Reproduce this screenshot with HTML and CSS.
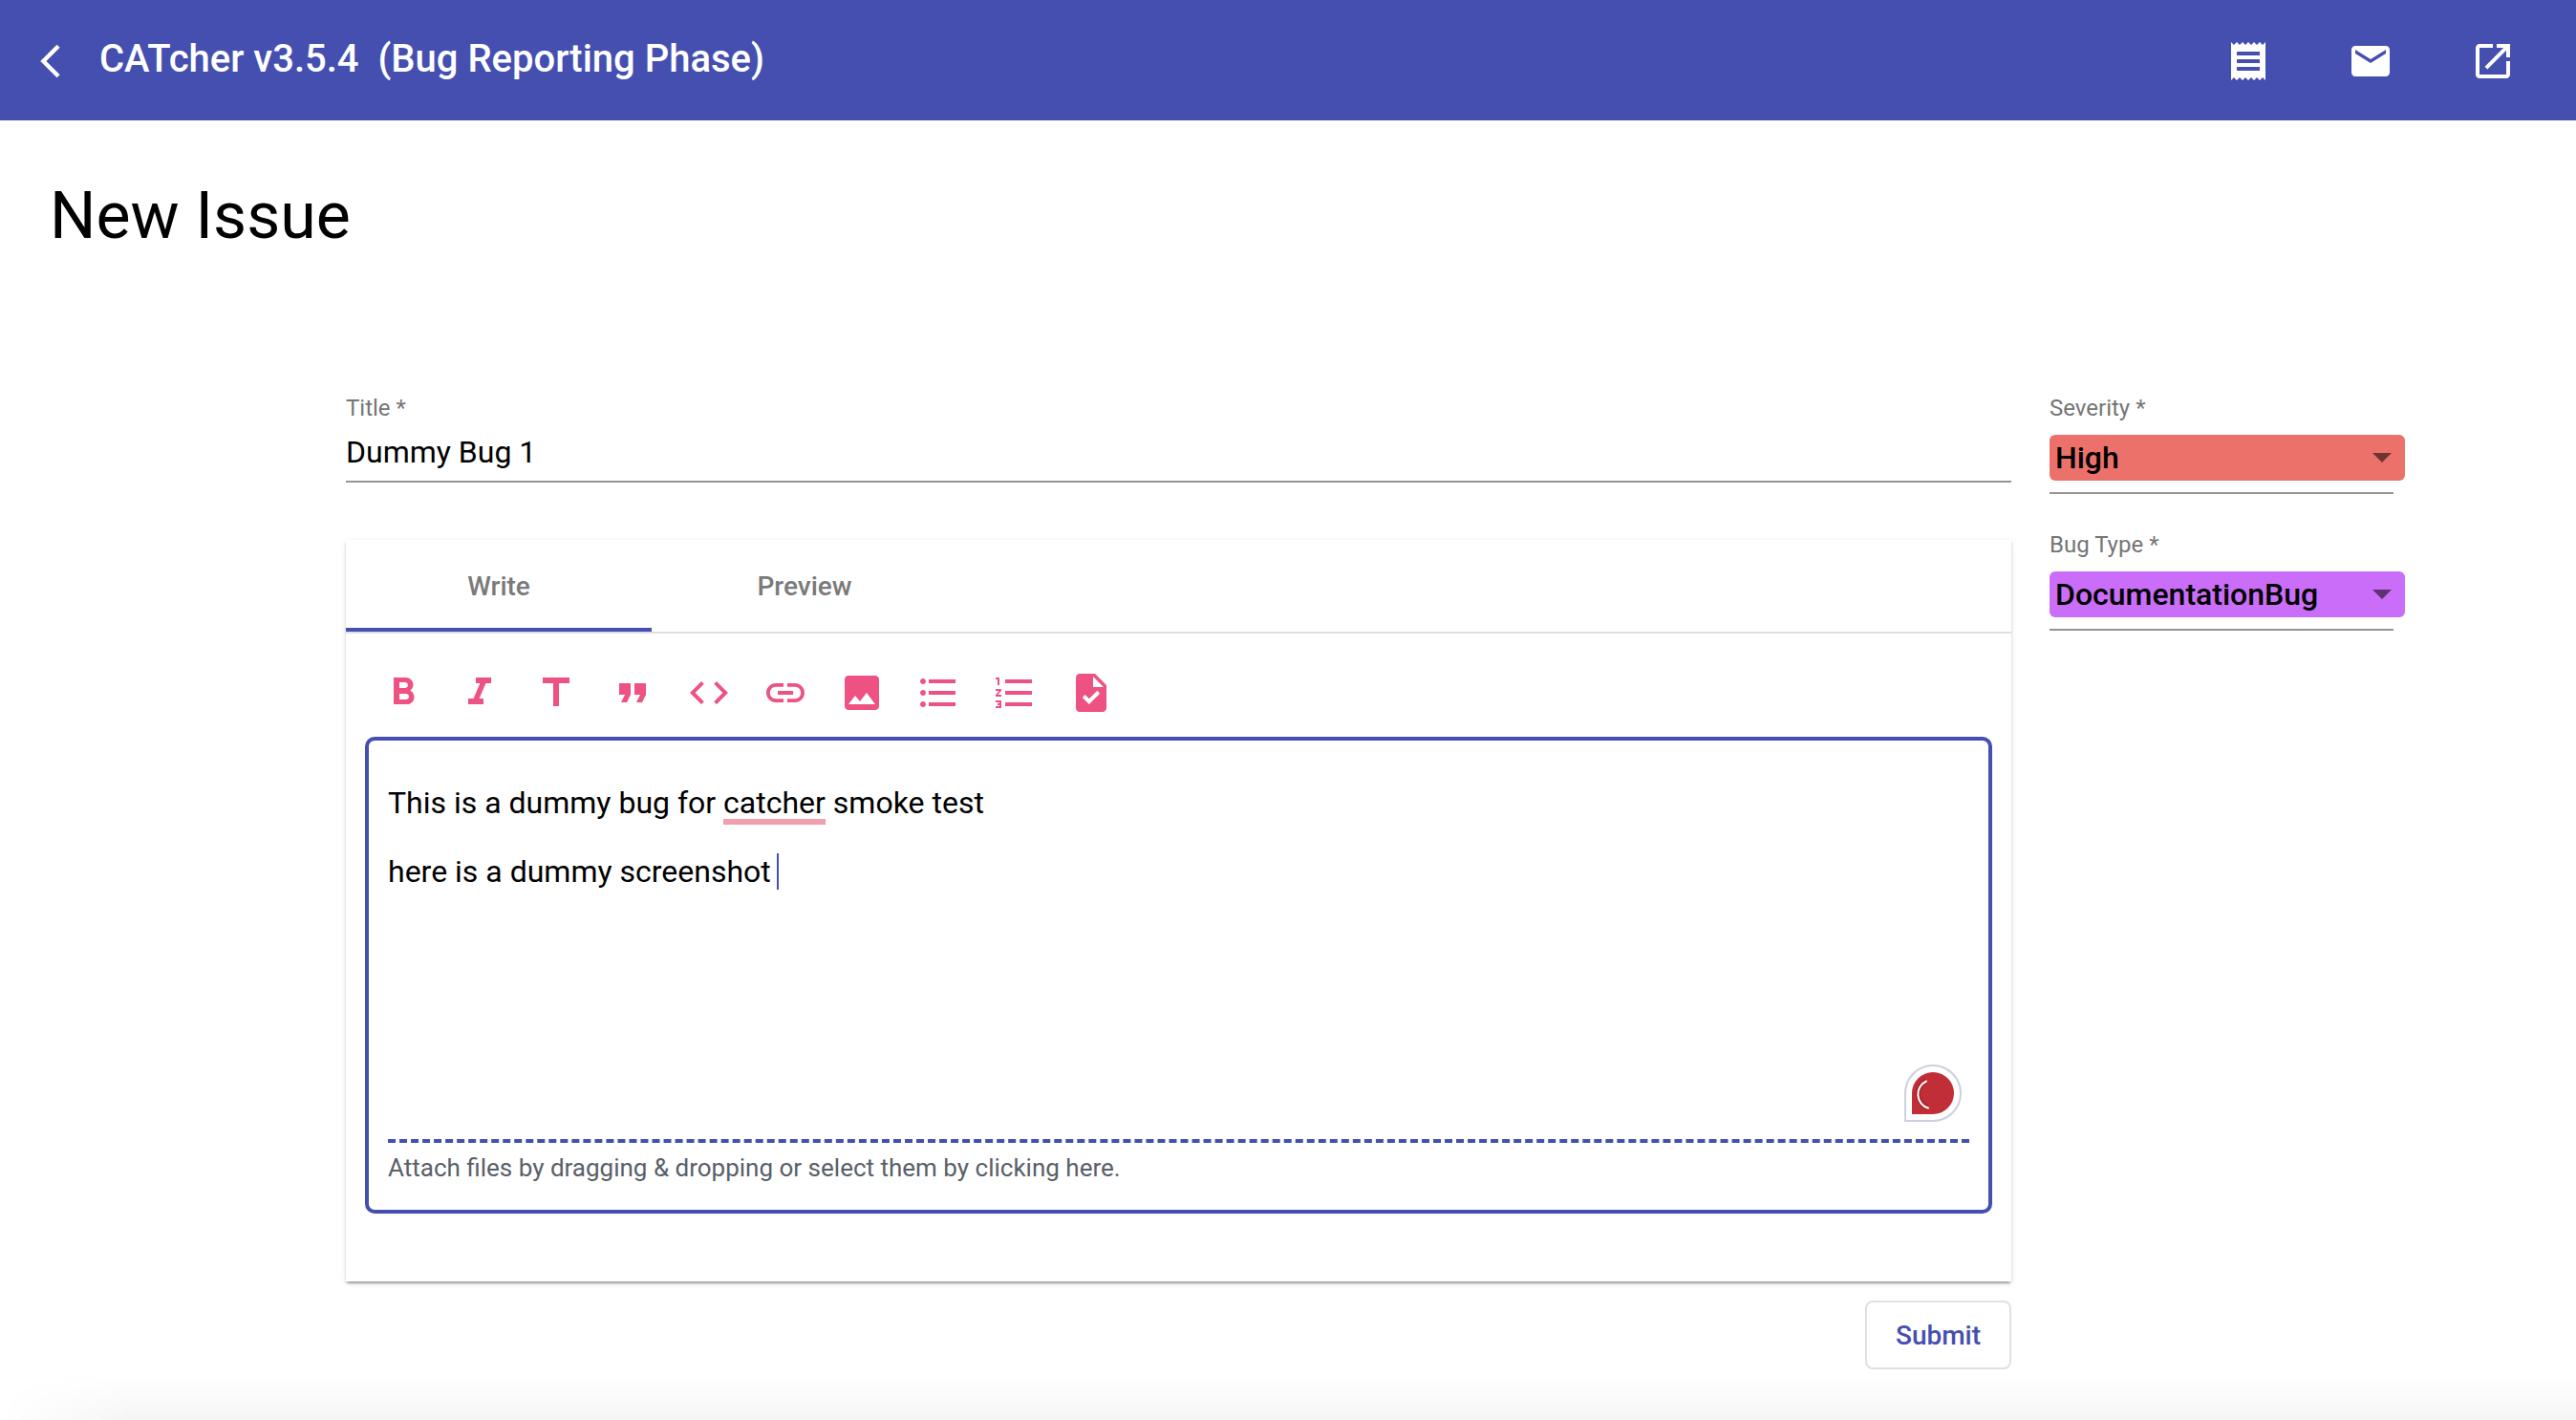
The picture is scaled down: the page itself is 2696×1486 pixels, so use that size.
FILE: index.html
```html
<!DOCTYPE html>
<html lang="en">
<head>
<meta charset="utf-8">
<meta name="viewport" content="width=device-width, initial-scale=1">
<title>CATcher</title>
<link rel="stylesheet" href="styles.css">
</head>
<body>
<header class="toolbar">
  <button class="toolbar-back" type="button" aria-label="Back">
    <svg class="back-icon" viewBox="0 0 24 24"><path d="M17.51 3.87L15.73 2.1 5.84 12l9.9 9.9 1.77-1.77L9.38 12z"/></svg>
  </button>
  <span class="toolbar-title">CATcher v3.5.4 &nbsp;(Bug Reporting Phase)</span>
  <nav class="toolbar-actions">
    <button class="icon-button" type="button" aria-label="Activity log">
      <svg class="icon" viewBox="0 0 24 24"><path d="M18 17H6v-2h12v2zm0-4H6v-2h12v2zm0-4H6V7h12v2zM3 22l1.5-1.5L6 22l1.500-1.500L9 22l1.500-1.500L12 22l1.500-1.500L15 22l1.500-1.500L18 22l1.500-1.500L21 22V2l-1.500 1.500L18 2l-1.500 1.500L15 2l-1.500 1.500L12 2l-1.500 1.500L9 2 7.500 3.500 6 2 4.500 3.500 3 2v20z"/></svg>
    </button>
    <button class="icon-button" type="button" aria-label="Mail">
      <svg class="icon" viewBox="0 0 24 24"><path d="M20 4H4c-1.100 0-1.990.9-1.990 2L2 18c0 1.100.9 2 2 2h16c1.100 0 2-.9 2-2V6c0-1.100-.9-2-2-2zm0 4l-8 5-8-5V6l8 5 8-5v2z"/></svg>
    </button>
    <a class="icon-button" href="#" aria-label="Open repository">
      <svg class="icon" viewBox="0 0 24 24"><path d="M19 19H5V5h7V3H5c-1.110 0-2 .9-2 2v14c0 1.100.89 2 2 2h14c1.100 0 2-.9 2-2v-7h-2v7zM14 3v2h3.590l-9.830 9.830 1.410 1.410L19 6.410V10h2V3h-7z"/></svg>
    </a>
  </nav>
</header>

<main class="page">
  <h1 class="page-title">New Issue</h1>
  <form class="issue-form">
    <div class="form-main">
      <div class="field">
        <label class="field-label" for="title">Title *</label>
        <input class="field-input" id="title" type="text" value="Dummy Bug 1">
      </div>

      <section class="card">
        <div class="tabs" role="tablist">
          <button class="tab tab-active" type="button" role="tab" aria-selected="true">Write</button>
          <button class="tab" type="button" role="tab" aria-selected="false">Preview</button>
        </div>
        <div class="editor-tools">
          <button class="tool" type="button" aria-label="Bold"><svg class="icon" viewBox="0 0 24 24"><path d="M15.600 10.790c.97-.67 1.650-1.770 1.650-2.790 0-2.260-1.750-4-4-4H7v14h7.040c2.090 0 3.710-1.700 3.710-3.790 0-1.520-.86-2.820-2.150-3.420zM10 6.500h3c.83 0 1.500.67 1.500 1.500s-.67 1.500-1.500 1.500h-3v-3zm3.500 9H10v-3h3.500c.83 0 1.500.67 1.500 1.500s-.67 1.500-1.500 1.500z"/></svg></button>
          <button class="tool" type="button" aria-label="Italic"><svg class="icon" viewBox="0 0 24 24"><path d="M10 4v3h2.210l-3.420 8H6v3h8v-3h-2.210l3.420-8H18V4z"/></svg></button>
          <button class="tool" type="button" aria-label="Heading"><svg class="icon" viewBox="0 0 24 24"><path d="M5 4v3h5.500v12h3V7H19V4z"/></svg></button>
          <button class="tool" type="button" aria-label="Quote"><svg class="icon" viewBox="0 0 24 24"><path d="M6 17h3l2-4V7H5v6h3zm8 0h3l2-4V7h-6v6h3z"/></svg></button>
          <button class="tool" type="button" aria-label="Code"><svg class="icon" viewBox="0 0 24 24"><path d="M9.400 16.600L4.800 12l4.600-4.600L8 6l-6 6 6 6 1.400-1.400zm5.200 0l4.600-4.600-4.600-4.600L16 6l6 6-6 6-1.400-1.400z"/></svg></button>
          <button class="tool" type="button" aria-label="Link"><svg class="icon" viewBox="0 0 24 24"><path d="M3.900 12c0-1.710 1.390-3.100 3.100-3.100h4V7H7c-2.760 0-5 2.240-5 5s2.240 5 5 5h4v-1.900H7c-1.710 0-3.100-1.390-3.100-3.100zM8 13h8v-2H8v2zm9-6h-4v1.900h4c1.710 0 3.100 1.390 3.100 3.100s-1.390 3.100-3.100 3.100h-4V17h4c2.760 0 5-2.240 5-5s-2.240-5-5-5z"/></svg></button>
          <button class="tool" type="button" aria-label="Image"><svg class="icon" viewBox="0 0 24 24"><path d="M21 19V5c0-1.100-.9-2-2-2H5c-1.100 0-2 .9-2 2v14c0 1.100.9 2 2 2h14c1.100 0 2-.9 2-2zM8.500 13.500l2.500 3.010L14.500 12l4.500 6H5l3.500-4.500z"/></svg></button>
          <button class="tool" type="button" aria-label="Bulleted list"><svg class="icon" viewBox="0 0 24 24"><path d="M4 10.500c-.83 0-1.500.67-1.500 1.500s.67 1.500 1.500 1.500 1.500-.67 1.500-1.500-.67-1.500-1.500-1.500zm0-6c-.83 0-1.500.67-1.500 1.500S3.170 7.500 4 7.500 5.500 6.830 5.500 6 4.830 4.500 4 4.500zm0 12c-.83 0-1.500.68-1.500 1.500s.68 1.500 1.500 1.500 1.500-.68 1.500-1.500-.67-1.500-1.500-1.500zM7 19h14v-2H7v2zm0-6h14v-2H7v2zm0-8v2h14V5H7z"/></svg></button>
          <button class="tool" type="button" aria-label="Numbered list"><svg class="icon" viewBox="0 0 24 24"><path d="M2 17h2v.5H3v1h1v.5H2v1h3v-4H2v1zm1-9h1V4H2v1h1v3zm-1 3h1.800L2 13.100v.9h3v-1H3.200L5 10.900V10H2v1zm5-6v2h14V5H7zm0 14h14v-2H7v2zm0-6h14v-2H7v2z"/></svg></button>
          <button class="tool" type="button" aria-label="Task list"><svg class="icon" viewBox="0 0 24 24"><path d="M14 2H6c-1.100 0-1.990.9-1.990 2L4 20c0 1.100.89 2 1.990 2H18c1.100 0 2-.9 2-2V8l-6-6zm-3.060 16L7.400 14.460l1.410-1.410 2.120 2.120 4.240-4.240 1.410 1.410L10.940 18zM13 9V3.500L18.500 9H13z"/></svg></button>
        </div>

        <div class="editor">
          <div class="editor-body">
            <textarea class="editor-text" aria-label="Description" spellcheck="false">This is a dummy bug for catcher smoke test

here is a dummy screenshot </textarea>
            <span class="spell-mark"></span>
            <span class="caret"></span>
            <svg class="checker" viewBox="0 0 60 60" aria-hidden="true">
              <path d="M1 59V30A29 29 0 1 1 30 59Z" fill="#fff" stroke="#cdd0de" stroke-width="2"/>
              <path d="M8 52V30A22 22 0 1 1 30 52Z" fill="#c22e38"/>
              <path d="M23 17A15 15 0 0 0 25 45" fill="none" stroke="#a82833" stroke-width="6"/>
              <path d="M23 17.500A15 15 0 0 0 25 45.500" fill="none" stroke="#fff" stroke-width="2" stroke-linecap="round"/>
            </svg>
          </div>
          <button class="attach" type="button">Attach files by dragging &amp; dropping or select them by clicking here.</button>
        </div>
      </section>

      <button class="submit" type="submit">Submit</button>
    </div>

    <aside class="form-side">
      <div class="side-field">
        <label class="field-label" for="severity">Severity *</label>
        <div class="select-wrap">
          <select class="select severity" id="severity"><option>High</option></select>
          <svg class="select-arrow" viewBox="0 0 20 10"><path d="M0 0h20L10 10z"/></svg>
        </div>
      </div>
      <div class="side-field">
        <label class="field-label" for="bugtype">Bug Type *</label>
        <div class="select-wrap">
          <select class="select bugtype" id="bugtype"><option>DocumentationBug</option></select>
          <svg class="select-arrow" viewBox="0 0 20 10"><path d="M0 0h20L10 10z"/></svg>
        </div>
      </div>
    </aside>
  </form>
</main>
<div class="bottom-shade"></div>
</body>
</html>
```
FILE: styles.css
```css
* {
  box-sizing: border-box;
}

:root {
  --primary: #454fb0;
  --accent: #ed5282;
  --line: #949494;
  --muted: #757575;
}

body {
  margin: 0;
  background: #fff;
  color: #000;
  font-family: Roboto, "Liberation Sans", sans-serif;
  font-size: 32px;
}

button,
input,
select,
textarea {
  margin: 0;
  padding: 0;
  border: 0;
  background: none;
  color: inherit;
  font: inherit;
  outline: 0;
}

.toolbar {
  display: flex;
  align-items: center;
  height: 126px;
  padding: 2px 47px 0 32px;
  background: var(--primary);
  color: #fff;
}

.toolbar-back {
  display: flex;
  width: 72px;
}

.back-icon {
  width: 42px;
  height: 42px;
  fill: currentColor;
}

.toolbar-title {
  font-size: 40px;
  font-weight: 500;
  line-height: 48px;
  padding-bottom: 4px;
}

.toolbar-actions {
  display: flex;
  gap: 48px;
  margin-left: auto;
}

.icon-button {
  display: flex;
  align-items: center;
  justify-content: center;
  width: 80px;
  height: 80px;
  color: inherit;
}

.icon {
  width: 48px;
  height: 48px;
  fill: currentColor;
}

.page {
  padding: 58px 52px 0;
}

.page-title {
  margin: 0;
  font-size: 68px;
  font-weight: 400;
  line-height: 84px;
}

.issue-form {
  display: grid;
  grid-template-columns: 1fr 360px;
  column-gap: 40px;
  padding: 143px 139px 0 310px;
}

.form-main {
  display: flex;
  flex-direction: column;
}

.field {
  display: flex;
  flex-direction: column;
  border-bottom: 2px solid var(--line);
}

.field-label {
  color: var(--muted);
  font-size: 24px;
  line-height: 32px;
}

.field-input {
  height: 36px;
  margin: 12px 0;
  line-height: 36px;
}

.card {
  margin-top: 60px;
  padding-bottom: 71px;
  background: #fff;
  box-shadow: 0 4px 2px -2px rgba(0, 0, 0, .2), 0 2px 2px 0 rgba(0, 0, 0, .14), 0 2px 6px 0 rgba(0, 0, 0, .12);
}

.tabs {
  display: flex;
  border-bottom: 2px solid #e0e0e0;
}

.tab {
  width: 320px;
  height: 96px;
  border-bottom: 4px solid transparent;
  border-top: 4px solid transparent;
  color: #7a7a7a;
  font-size: 28px;
  font-weight: 500;
}

.tab-active {
  border-bottom-color: var(--primary);
}

.editor-tools {
  display: flex;
  padding: 22px 20px 6px;
  color: var(--accent);
}

.tool {
  display: flex;
  align-items: center;
  justify-content: center;
  width: 80px;
  height: 80px;
}

.editor {
  display: flex;
  flex-direction: column;
  margin: 0 20px;
  padding: 0 20px;
  border: 4px solid var(--primary);
  border-radius: 10px;
}

.editor-body {
  position: relative;
  display: flex;
}

.editor-text {
  flex: 1;
  height: 417px;
  padding: 47px 0 0;
  line-height: 36px;
  resize: none;
  overflow: hidden;
}

.spell-mark {
  position: absolute;
  left: 351px;
  top: 82px;
  width: 107px;
  height: 6px;
  background: #f19fac;
}

.caret {
  position: absolute;
  left: 407px;
  top: 118px;
  width: 2px;
  height: 38px;
  background: var(--primary);
}

.checker {
  position: absolute;
  right: 8px;
  bottom: 18px;
  width: 60px;
  height: 60px;
}

.attach {
  height: 74px;
  padding-bottom: 18px;
  border-top: 4px dashed var(--primary);
  color: #586069;
  font-size: 26px;
  text-align: left;
}

.submit {
  align-self: flex-end;
  width: 153px;
  height: 72px;
  margin-top: 20px;
  border: 2px solid #e0e0e0;
  border-radius: 8px;
  color: var(--primary);
  font-size: 28px;
  font-weight: 500;
}

.form-side {
  display: flex;
  flex-direction: column;
  gap: 37px;
}

.side-field {
  display: flex;
  flex-direction: column;
  border-bottom: 2px solid var(--line);
}

.select-wrap {
  position: relative;
  display: flex;
  margin: 12px -12px 12px 0;
}

.select {
  width: 100%;
  height: 48px;
  padding: 0 6px;
  border-radius: 6px;
  font-weight: 500;
  appearance: none;
}

.severity {
  background: #ed716b;
}

.bugtype {
  background: #ca6df8;
}

.select-arrow {
  position: absolute;
  right: 14px;
  top: 19px;
  width: 20px;
  height: 10px;
  fill: rgba(0, 0, 0, .54);
  pointer-events: none;
}

.bottom-shade {
  position: fixed;
  right: 0;
  bottom: 0;
  left: 0;
  height: 46px;
  background: linear-gradient(rgba(0, 0, 0, 0), rgba(0, 0, 0, .04));
  mask-image: linear-gradient(to right, transparent, #000 140px);
  pointer-events: none;
}
```
